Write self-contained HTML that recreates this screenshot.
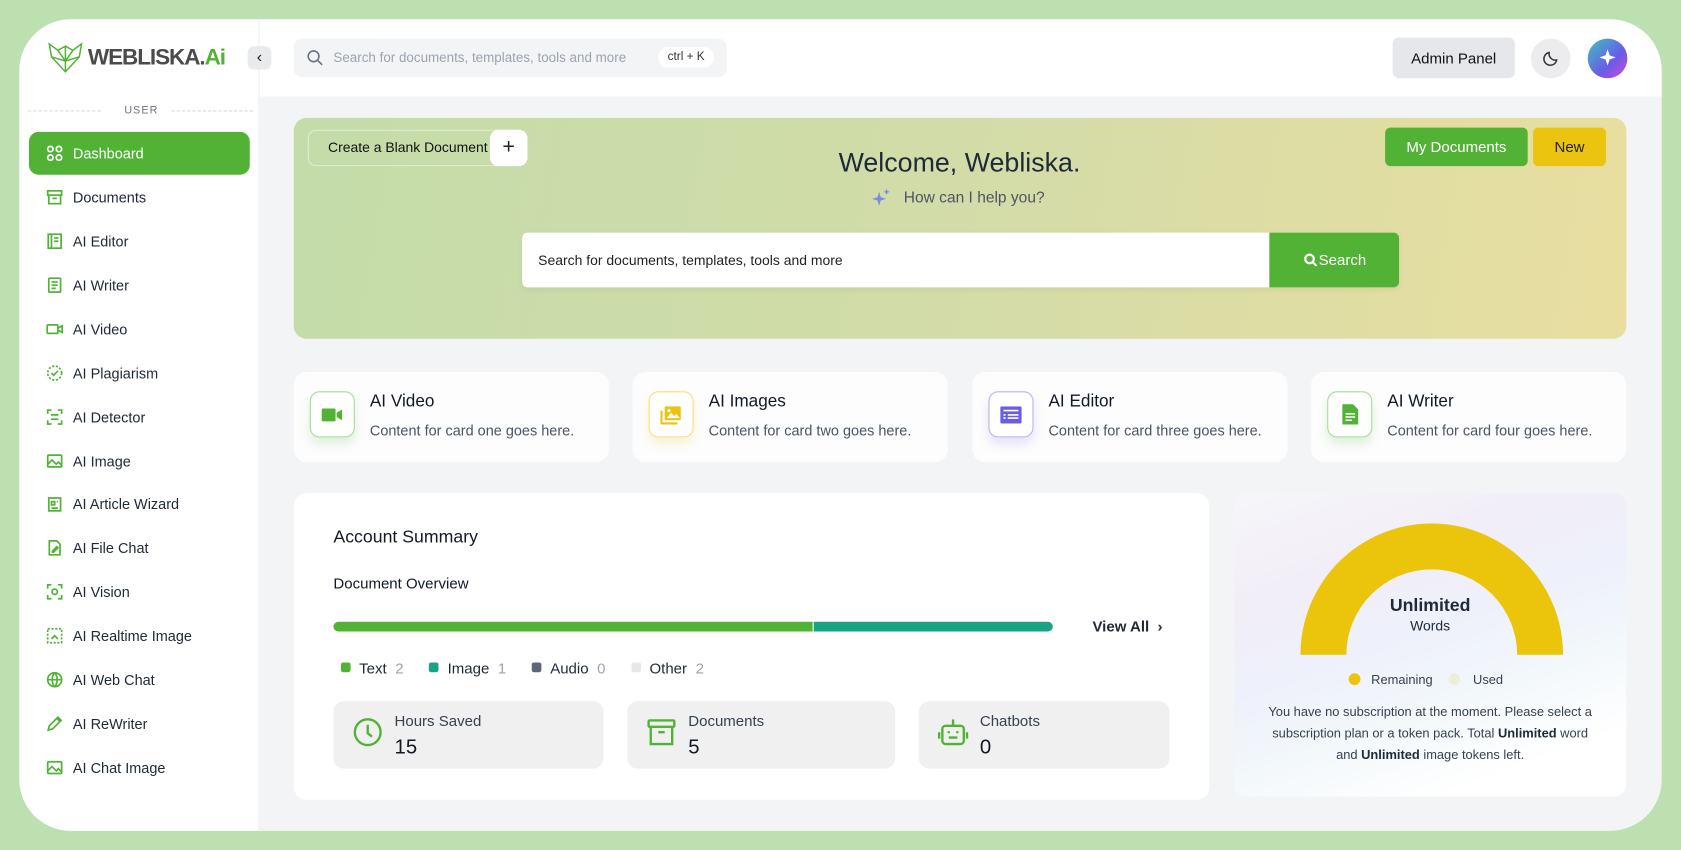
<!DOCTYPE html>
<html><head><meta charset="utf-8"><style>
*{box-sizing:border-box;margin:0;padding:0}
html,body{width:1681px;height:850px;overflow:hidden;background:#bde0b1;font-family:"Liberation Sans",sans-serif;color:#1f2937}
#w{position:absolute;left:0;top:0;width:1568px;height:793px;transform:scale(1.07207);transform-origin:0 0}
.a{position:absolute}
#panel{left:18px;top:18px;width:1532px;height:757px;background:#f3f4f6;border-radius:48px;overflow:hidden}
#side{left:0;top:0;width:224px;height:757px;background:#fff;border-right:1px solid #eceef1}
#head{left:224px;top:0;width:1308px;height:72px;background:#fff}
.nav{position:absolute;left:9px;width:206px;height:40px;border-radius:9px;display:flex;align-items:center;padding-left:16px;font-size:13.5px;color:#1f2937}
.nav svg{width:16px;height:16px;margin-right:9px;fill:none;stroke:#52b236;stroke-width:1.6}
.card{position:absolute;top:329px;width:294px;height:84px;background:#fdfdfd;border-radius:12px}
.ib{position:absolute;left:15px;top:18px;width:42px;height:43px;border-radius:9px;background:#fff;display:flex;align-items:center;justify-content:center}
.ct{position:absolute;left:71px;top:19px;font-size:16px;color:#111827}
.cs{position:absolute;left:71px;top:47px;font-size:13.5px;color:#4b5563}
.st{position:absolute;top:636px;height:63px;background:#f0f0f0;border-radius:10px}
.st .l{position:absolute;left:57px;top:10px;font-size:14px;color:#374151}
.st .v{position:absolute;left:57px;top:33px;font-size:19px;color:#111827}
.st svg{position:absolute;left:17px;top:14px;width:30px;height:30px;fill:none;stroke:#52b236;stroke-width:2.2}
.lg{display:inline-flex;align-items:center;font-size:14px;color:#1f2937;margin-right:24px}
.lg i{width:9px;height:9px;border-radius:2px;margin-right:8px;display:inline-block}
.lg b{font-weight:normal;color:#9ca3af;margin-left:8px}
</style></head><body><div id="w">
<div id="panel" class="a">
 <div id="side" class="a">
  <svg class="a" style="left:26px;top:21px" width="34" height="30" viewBox="0 0 34 30" fill="none" stroke="#52b236" stroke-width="1.4"><path d="M2 2 L10 8 L17 4 L24 8 L32 2 L30 14 L17 28 L4 14 Z M10 8 L17 18 L24 8 M4 14 L17 18 L30 14 M17 4 L17 28"/></svg>
  <div class="a" style="left:64px;top:24px;font-size:21px;font-weight:bold;color:#4b4b4b;letter-spacing:-1px">WEBLISKA.<span style="color:#52b236">Ai</span></div>
  <div class="a" style="left:8px;top:85px;width:68px;border-top:1px dashed #d6d9de"></div>
  <div class="a" style="left:98px;top:80px;font-size:10px;color:#6b7280;letter-spacing:1px">USER</div>
  <div class="a" style="left:142px;top:85px;width:76px;border-top:1px dashed #d6d9de"></div>
  <div class="nav" style="top:105px;background:#52b236;color:#fff"><svg viewBox="0 0 16 16" style="stroke:#fff"><circle cx="4" cy="4" r="2.5"/><circle cx="12" cy="4" r="2.5"/><circle cx="4" cy="12" r="2.5"/><circle cx="12" cy="12" r="2.5"/></svg>Dashboard</div>
  <div class="nav" style="top:146px"><svg viewBox="0 0 16 16"><rect x="1.5" y="2" width="13" height="4"/><path d="M2.5 6v8h11V6M6 9h4"/></svg>Documents</div>
  <div class="nav" style="top:187px"><svg viewBox="0 0 16 16"><rect x="2" y="1.5" width="12" height="13"/><path d="M5 1.5v13M7.5 5h4M7.5 8h4"/></svg>AI Editor</div>
  <div class="nav" style="top:228px"><svg viewBox="0 0 16 16"><rect x="2.5" y="1.5" width="11" height="13" rx="1"/><path d="M5 5h6M5 8h6M5 11h4"/></svg>AI Writer</div>
  <div class="nav" style="top:269px"><svg viewBox="0 0 16 16"><rect x="1" y="4" width="10" height="8" rx="1"/><path d="M11 7l4-2v6l-4-2"/></svg>AI Video</div>
  <div class="nav" style="top:310px"><svg viewBox="0 0 16 16"><circle cx="8" cy="8" r="6.5" stroke-dasharray="2 1.5"/><path d="M5 8l2 2 4-4"/></svg>AI Plagiarism</div>
  <div class="nav" style="top:351px"><svg viewBox="0 0 16 16"><path d="M1.5 5V1.5H5M11 1.5h3.5V5M14.5 11v3.5H11M5 14.5H1.5V11M4.5 6h7M4.5 10h7"/></svg>AI Detector</div>
  <div class="nav" style="top:392px"><svg viewBox="0 0 16 16"><rect x="1.5" y="2.5" width="13" height="11" rx="1"/><path d="M1.5 11l4-4 4 4 2-2 3 3"/></svg>AI Image</div>
  <div class="nav" style="top:432px"><svg viewBox="0 0 16 16"><rect x="2.5" y="2.5" width="11" height="12"/><path d="M5 6h3v3H5zM10 6h1M5 12h6"/></svg>AI Article Wizard</div>
  <div class="nav" style="top:473px"><svg viewBox="0 0 16 16"><path d="M3 1.5h7l3 3v10H3z M6 11l4-4 1 1-4 4H6z"/></svg>AI File Chat</div>
  <div class="nav" style="top:514px"><svg viewBox="0 0 16 16"><path d="M1.5 5V1.5H5M11 1.5h3.5V5M14.5 11v3.5H11M5 14.5H1.5V11"/><circle cx="8" cy="8" r="2.5"/></svg>AI Vision</div>
  <div class="nav" style="top:555px"><svg viewBox="0 0 16 16"><rect x="1.5" y="1.5" width="13" height="13" stroke-dasharray="2 1.5"/><path d="M5 11l3-3 3 3"/></svg>AI Realtime Image</div>
  <div class="nav" style="top:596px"><svg viewBox="0 0 16 16"><circle cx="8" cy="8" r="6.5"/><path d="M1.5 8h13M8 1.5c-3 3-3 10 0 13M8 1.5c3 3 3 10 0 13"/></svg>AI Web Chat</div>
  <div class="nav" style="top:637px"><svg viewBox="0 0 16 16"><path d="M2 14l1-4 8-8 3 3-8 8zM10 3l3 3"/></svg>AI ReWriter</div>
  <div class="nav" style="top:678px"><svg viewBox="0 0 16 16"><rect x="1.5" y="2.5" width="13" height="11" rx="1"/><path d="M1.5 11l4-4 4 4 2-2 3 3"/></svg>AI Chat Image</div>
 </div>
 <div id="head" class="a"></div>
 <div class="a" style="left:213px;top:25px;width:22px;height:22px;border-radius:6px;background:#e9eaec;text-align:center;font-size:15px;line-height:21px;color:#222">&#8249;</div>
 <div class="a" style="left:256px;top:18px;width:404px;height:36px;background:#f3f4f6;border-radius:8px">
  <svg class="a" style="left:12px;top:10px" width="16" height="16" viewBox="0 0 16 16" fill="none" stroke="#6b7280" stroke-width="1.5"><circle cx="6.5" cy="6.5" r="5"/><path d="M10.5 10.5l4 4"/></svg>
  <div class="a" style="left:37px;top:11px;font-size:12.5px;color:#9ca3af">Search for documents, templates, tools and more</div>
  <div class="a" style="left:340px;top:8px;width:52px;height:19px;background:#fff;border-radius:9px;font-size:11px;line-height:19px;text-align:center;color:#333">ctrl + K</div>
 </div>
 <div class="a" style="left:1281px;top:17px;width:114px;height:38px;background:#e5e7eb;border-radius:6px;font-size:14px;line-height:38px;text-align:center;color:#111">Admin Panel</div>
 <div class="a" style="left:1410px;top:18px;width:37px;height:37px;background:#ececee;border-radius:50%"><svg class="a" style="left:11px;top:10px" width="16" height="16" viewBox="0 0 16 16" fill="none" stroke="#333" stroke-width="1.4"><path d="M13 10A6 6 0 0 1 6 3a6 6 0 1 0 7 7z"/></svg></div>
 <div class="a" style="left:1463px;top:18px;width:37px;height:37px;border-radius:50%;background:linear-gradient(135deg,#3ec4c0,#6a5be8 60%,#d14ad6)"><svg class="a" style="left:9px;top:9px" width="19" height="19" viewBox="0 0 20 20" fill="#fff"><path d="M10 1l2 6 6 2-6 2-2 6-2-6-6-2 6-2z"/></svg></div>

 <div class="a" style="left:256px;top:92px;width:1243px;height:206px;border-radius:12px;background:linear-gradient(100deg,#c3dca9 0%,#d3dca8 50%,#e9dea0 100%)"></div>
 <div class="a" style="left:269px;top:103px;width:204px;height:34px;border:1px solid #e4ecd6;border-radius:8px;font-size:13px;line-height:32px;padding-left:18px;color:#111">Create a Blank Document</div>
 <div class="a" style="left:439px;top:103px;width:35px;height:34px;background:#fff;border-radius:8px;font-size:20px;line-height:33px;text-align:center;color:#222">+</div>
 <div class="a" style="left:577px;top:120px;width:600px;text-align:center;font-size:25px;color:#1f2937">Welcome, Webliska.</div>
 <svg class="a" style="left:794px;top:157px" width="20" height="20" viewBox="0 0 20 20" fill="#7b8be0"><path d="M8 4l1.5 5 5 1.5-5 1.5L8 17l-1.5-5-5-1.5 5-1.5z M15 1l.8 2.2 2.2.8-2.2.8L15 7l-.8-2.2L12 4l2.2-.8z"/></svg>
 <div class="a" style="left:825px;top:159px;font-size:14.5px;color:#4b5563">How can I help you?</div>
 <div class="a" style="left:469px;top:199px;width:818px;height:51px;background:#fff;border-radius:5px;box-shadow:0 2px 6px rgba(0,0,0,.06)">
  <div class="a" style="left:15px;top:18px;font-size:13px;color:#222">Search for documents, templates, tools and more</div>
  <div class="a" style="left:697px;top:0;width:121px;height:51px;background:#52b236;border-radius:0 5px 5px 0;color:#fff;font-size:14px;line-height:51px;padding-left:32px;font-weight:bold"><svg style="position:absolute;left:32px;top:19px" width="13" height="13" viewBox="0 0 13 13" fill="none" stroke="#fff" stroke-width="2"><circle cx="5.5" cy="5.5" r="4"/><path d="M8.5 8.5l3.5 3.5"/></svg><span style="margin-left:14px;font-weight:normal">Search</span></div>
 </div>
 <div class="a" style="left:1274px;top:101px;width:133px;height:36px;background:#52b236;border-radius:5px;color:#fff;font-size:14px;line-height:36px;text-align:center">My Documents</div>
 <div class="a" style="left:1412px;top:101px;width:68px;height:36px;background:#eac40f;border-radius:5px;color:#222;font-size:14px;line-height:36px;text-align:center">New</div>

 <div class="card" style="left:256px"><div class="ib" style="border:1px solid #a9d99a;box-shadow:0 6px 10px rgba(82,178,54,.18)"><svg width="20" height="14" viewBox="0 0 20 14" fill="#52b236"><rect x="0" y="1" width="13" height="12" rx="1"/><path d="M14 5l5-3v10l-5-3z"/></svg></div><div class="ct">AI Video</div><div class="cs">Content for card one goes here.</div></div>
 <div class="card" style="left:572px"><div class="ib" style="border:1px solid #f3de85;box-shadow:0 6px 10px rgba(234,196,15,.18)"><svg width="20" height="18" viewBox="0 0 20 18" fill="#eac40f"><path d="M0 5h2v11h14v2H0z"/><rect x="4" y="1" width="15" height="13" rx="1"/><path d="M6 12l4-5 3 3 2-2 3 4z" fill="#fff"/><circle cx="8" cy="5" r="1.5" fill="#fff"/></svg></div><div class="ct">AI Images</div><div class="cs">Content for card two goes here.</div></div>
 <div class="card" style="left:889px"><div class="ib" style="border:1px solid #b8b3f2;box-shadow:0 6px 10px rgba(110,100,230,.18)"><svg width="20" height="16" viewBox="0 0 20 16" fill="#6a5ce6"><rect x="0" y="0" width="20" height="16" rx="1.5"/><path d="M3 4h14M7 8h10M7 11h10M3 8h2M3 11h2" stroke="#fff" stroke-width="1.5"/></svg></div><div class="ct">AI Editor</div><div class="cs">Content for card three goes here.</div></div>
 <div class="card" style="left:1205px"><div class="ib" style="border:1px solid #a9d99a;box-shadow:0 6px 10px rgba(82,178,54,.18)"><svg width="15" height="19" viewBox="0 0 15 19" fill="#52b236"><path d="M0 0h10l5 5v14H0z"/><path d="M3 9h9M3 12h9M3 15h6" stroke="#fff" stroke-width="1.4"/></svg></div><div class="ct">AI Writer</div><div class="cs">Content for card four goes here.</div></div>

 <div class="a" style="left:256px;top:442px;width:854px;height:286px;background:#fff;border-radius:12px"></div>
 <div class="a" style="left:293px;top:474px;font-size:16.5px;color:#111827">Account Summary</div>
 <div class="a" style="left:293px;top:518px;font-size:14px;color:#111827">Document Overview</div>
 <div class="a" style="left:293px;top:562px;width:447px;height:9px;background:#52b236;border-radius:5px 0 0 5px"></div>
 <div class="a" style="left:741px;top:562px;width:223px;height:9px;background:#1aa284;border-radius:0 5px 5px 0"></div>
 <div class="a" style="left:1001px;top:558px;font-size:14px;font-weight:bold;color:#1f2937">View All &nbsp;&#8250;</div>
 <div class="a" style="left:300px;top:596px"><span class="lg"><i style="background:#52b236"></i>Text<b>2</b></span><span class="lg"><i style="background:#1aa284"></i>Image<b>1</b></span><span class="lg"><i style="background:#5f6679"></i>Audio<b>0</b></span><span class="lg"><i style="background:#e5e7eb"></i>Other<b>2</b></span></div>
 <div class="st" style="left:293px;width:252px"><svg viewBox="0 0 30 30"><circle cx="15" cy="15" r="12"/><path d="M15 8v8l4 3"/></svg><div class="l">Hours Saved</div><div class="v">15</div></div>
 <div class="st" style="left:567px;width:250px"><svg viewBox="0 0 30 30"><rect x="3" y="4" width="24" height="6" rx="1"/><path d="M5 10v16h20V10M12 15h6"/></svg><div class="l">Documents</div><div class="v">5</div></div>
 <div class="st" style="left:839px;width:234px"><svg viewBox="0 0 30 30"><rect x="5" y="9" width="20" height="17" rx="3"/><path d="M15 3v6M2 15v6M28 15v6M11 14v2M19 14v2M11 20h8"/></svg><div class="l">Chatbots</div><div class="v">0</div></div>

 <div class="a" style="left:1133px;top:442px;width:366px;height:283px;border-radius:12px;background:linear-gradient(160deg,#f6f6fa 0%,#f2eef7 25%,#eef0fb 45%,#f3f8fb 65%,#fff 85%)"></div>
 <svg class="a" style="left:1195px;top:470px" width="245" height="124" viewBox="0 0 246 124"><path d="M0 123A123 123 0 0 1 246 123H203A80 80 0 0 0 43 123Z" fill="#ebc40c"/></svg>
 <div class="a" style="left:1216px;top:538px;width:200px;text-align:center;font-size:16.5px;font-weight:bold;color:#1f2937">Unlimited</div>
 <div class="a" style="left:1216px;top:558px;width:200px;text-align:center;font-size:13px;color:#1f2937">Words</div>
 <div class="a" style="left:1240px;top:610px;width:11px;height:11px;border-radius:50%;background:#ebc40c"></div>
 <div class="a" style="left:1261px;top:609px;font-size:12px;color:#374151">Remaining</div>
 <div class="a" style="left:1333px;top:610px;width:11px;height:11px;border-radius:50%;background:#eeeed8"></div>
 <div class="a" style="left:1356px;top:609px;font-size:12px;color:#374151">Used</div>
 <div class="a" style="left:1163px;top:636px;width:306px;text-align:center;font-size:12px;line-height:20px;color:#374151">You have no subscription at the moment. Please select a subscription plan or a token pack. Total <b style="color:#1f2937">Unlimited</b> word and <b style="color:#1f2937">Unlimited</b> image tokens left.</div>
</div>
</div></body></html>
